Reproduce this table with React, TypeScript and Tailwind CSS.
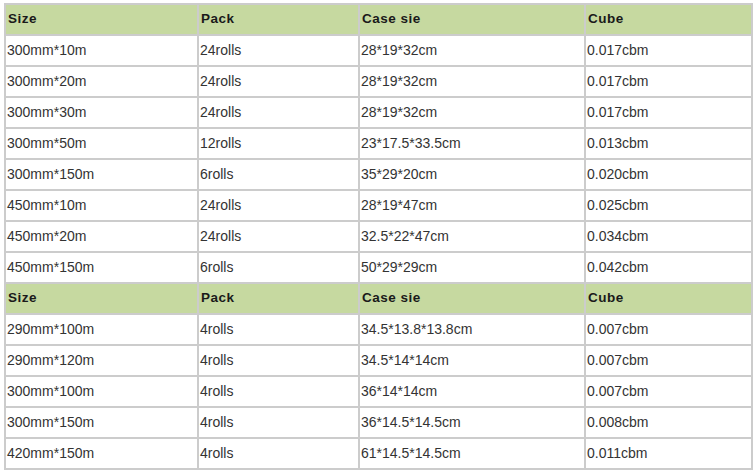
const header = ['Size', 'Pack', 'Case sie', 'Cube']

const groupA = [
  ['300mm*10m', '24rolls', '28*19*32cm', '0.017cbm'],
  ['300mm*20m', '24rolls', '28*19*32cm', '0.017cbm'],
  ['300mm*30m', '24rolls', '28*19*32cm', '0.017cbm'],
  ['300mm*50m', '12rolls', '23*17.5*33.5cm', '0.013cbm'],
  ['300mm*150m', '6rolls', '35*29*20cm', '0.020cbm'],
  ['450mm*10m', '24rolls', '28*19*47cm', '0.025cbm'],
  ['450mm*20m', '24rolls', '32.5*22*47cm', '0.034cbm'],
  ['450mm*150m', '6rolls', '50*29*29cm', '0.042cbm'],
]

const groupB = [
  ['290mm*100m', '4rolls', '34.5*13.8*13.8cm', '0.007cbm'],
  ['290mm*120m', '4rolls', '34.5*14*14cm', '0.007cbm'],
  ['300mm*100m', '4rolls', '36*14*14cm', '0.007cbm'],
  ['300mm*150m', '4rolls', '36*14.5*14.5cm', '0.008cbm'],
  ['420mm*150m', '4rolls', '61*14.5*14.5cm', '0.011cbm'],
]

const cell = 'h-[31px] border-2 border-[#cccccc] px-[1px] align-middle'

function HeaderRow() {
  return (
    <tr className="bg-[#c6d9a0]">
      {header.map((h) => (
        <td key={h} className={`${cell} pl-[2px] font-bold text-[13.5px] tracking-[0.5px] text-[#1a1a1a]`}>{h}</td>
      ))}
    </tr>
  )
}

function DataRows({ rows }: { rows: string[][] }) {
  return (
    <>
      {rows.map((r) => (
        <tr key={r[0]} className="bg-white">
          {r.map((v, i) => (
            <td key={i} className={cell}>{v}</td>
          ))}
        </tr>
      ))}
    </>
  )
}

export default function App() {
  return (
    <main className="min-h-screen bg-white pt-[3px] pl-[4px] font-['Liberation_Sans',Arial,sans-serif] text-[14px] text-[#333333]">
      <table className="w-[747px] table-fixed border-collapse">
        <colgroup>
          <col className="w-[193px]" />
          <col className="w-[161px]" />
          <col className="w-[226px]" />
          <col className="w-[167px]" />
        </colgroup>
        <tbody>
          <HeaderRow />
          <DataRows rows={groupA} />
          <HeaderRow />
          <DataRows rows={groupB} />
        </tbody>
      </table>
    </main>
  )
}
